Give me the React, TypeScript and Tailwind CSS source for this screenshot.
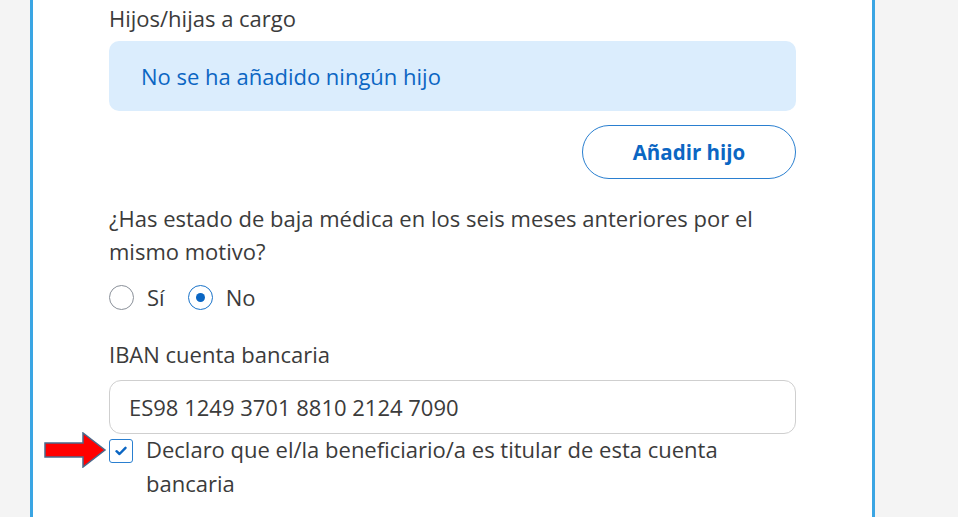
import React, { useState } from "react";

const font = { fontFamily: '"Open Sans", "Noto Sans", sans-serif' };

function Radio({ checked, label, onClick }: { checked: boolean; label: string; onClick: () => void }) {
  return (
    <button onClick={onClick} className="flex items-center gap-[13px]">
      <span
        className={
          checked
            ? "flex h-[25px] w-[25px] items-center justify-center rounded-full border-[1.5px] border-[#1a73c9]"
            : "flex h-[25px] w-[25px] items-center justify-center rounded-full border-[1.5px] border-[#8a9099]"
        }
      >
        {checked && <span className="h-[9px] w-[9px] rounded-full bg-[#0b66c3]" />}
      </span>
      <span>{label}</span>
    </button>
  );
}

export default function App() {
  const [baja, setBaja] = useState<"si" | "no">("no");
  const [titular, setTitular] = useState(true);

  return (
    <div className="flex h-[517px] w-[958px] overflow-hidden bg-[#f4f4f4]" style={font}>
      <div className="ml-[30px] w-[845px] border-x-[3px] border-[#3aa5e3] bg-white px-[76px] text-[22px] text-[#3b3b3b]">
        <p className="mt-[2px] leading-[32px]">Hijos/hijas a cargo</p>

        <div className="mt-[7px] flex h-[70px] items-center rounded-[10px] bg-[#dbedfd] px-[32px] text-[#0b66c3]">
          No se ha añadido ningún hijo
        </div>

        <div className="mt-[14px] flex justify-end">
          <button className="h-[54px] w-[214px] rounded-full border-[1.5px] border-[#2a7fd0] text-[20.5px] font-bold text-[#0b66c3]">
            Añadir hijo
          </button>
        </div>

        <p className="mt-[23px] leading-[33px]">
          ¿Has estado de baja médica en los seis meses anteriores por el mismo motivo?
        </p>

        <div className="mt-[13px] flex gap-[23px]">
          <Radio checked={baja === "si"} label="Sí" onClick={() => setBaja("si")} />
          <Radio checked={baja === "no"} label="No" onClick={() => setBaja("no")} />
        </div>

        <p className="mt-[24px] leading-[32px]">IBAN cuenta bancaria</p>

        <div className="mt-[10px] flex h-[54px] items-center rounded-[12px] border-[1.5px] border-[#cfcfcf] px-[19px]">
          ES98 1249 3701 8810 2124 7090
        </div>

        <div className="relative mt-[-2px] flex gap-[13px]">
          <svg className="absolute left-[-65px] top-0" width="64" height="36" viewBox="0 0 64 36">
            <path
              d="M1 11 H39 V1 L61 18 L39 35 V25 H1 Z"
              fill="#ff0000"
              stroke="#4a6a8c"
              strokeWidth="1.5"
              strokeLinejoin="miter"
            />
          </svg>
          <button
            onClick={() => setTitular(!titular)}
            className="mt-[7px] flex h-[24px] w-[24px] shrink-0 items-center justify-center rounded-[3px] border-[1.5px] border-[#2a7fd0] bg-white"
          >
            {titular && (
              <svg width="12" height="10" viewBox="0 0 12 10">
                <path d="M1.5 5.2 L4.5 8 L10.5 1.8" fill="none" stroke="#0b66c3" strokeWidth="2.4" strokeLinecap="round" strokeLinejoin="round" />
              </svg>
            )}
          </button>
          <p className="leading-[34px]">Declaro que el/la beneficiario/a es titular de esta cuenta bancaria</p>
        </div>
      </div>
    </div>
  );
}
